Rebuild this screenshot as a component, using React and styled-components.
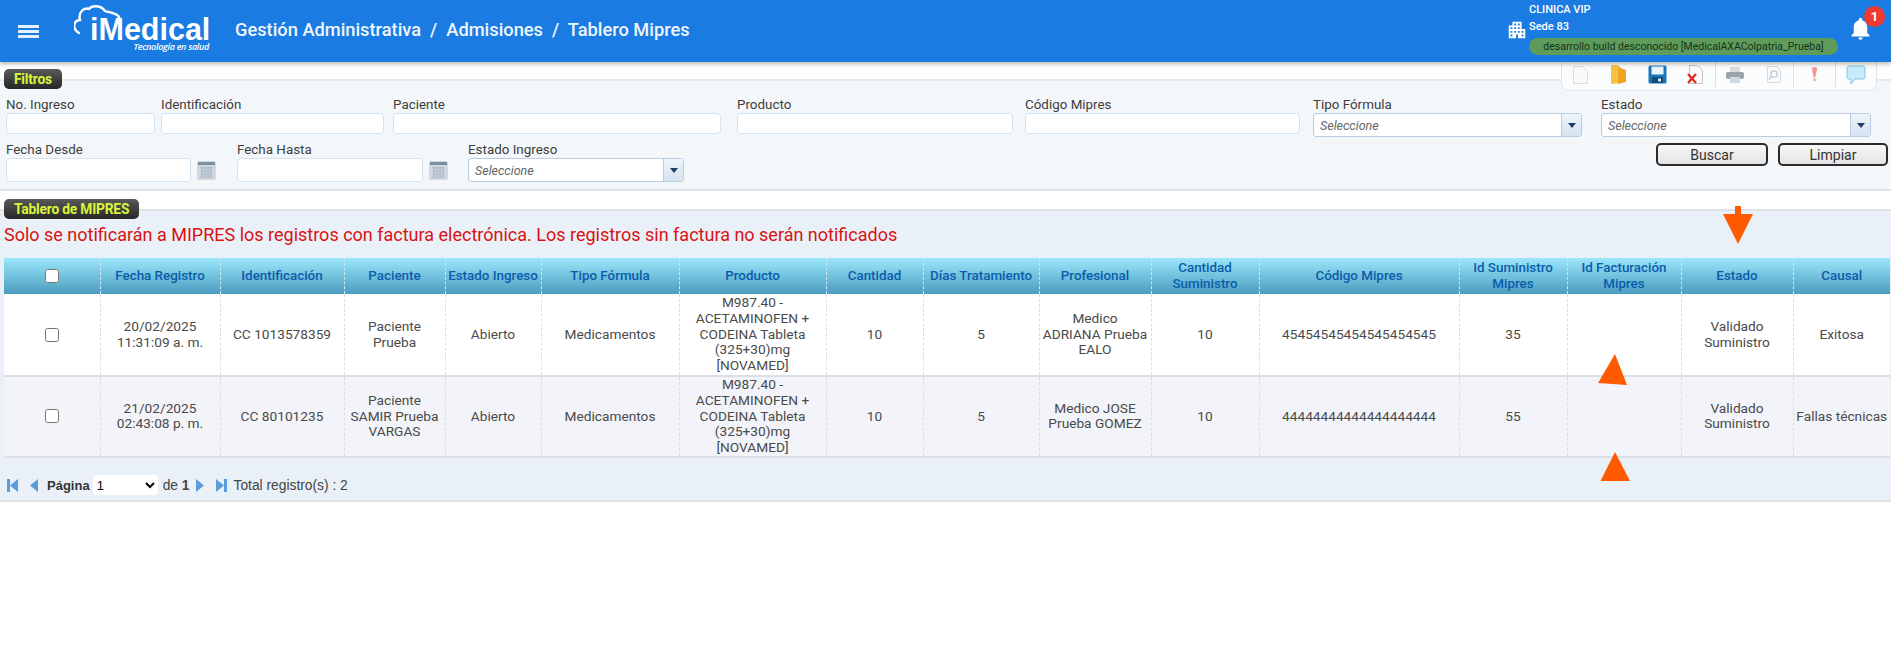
import React from 'react';
import styled, { createGlobalStyle } from 'styled-components';
import { MdApartment, MdNotifications } from 'react-icons/md';

const GlobalStyle = createGlobalStyle`
  html, body {
    margin: 0;
    padding: 0;
    background: #fff;
    font-family: Roboto, "Liberation Sans", sans-serif;
    color: #444;
  }
`;

const Page = styled.div`
  position: relative;
  width: 1891px;
  height: 664px;
  overflow: hidden;
`;

/* barra superior */
const Header = styled.header`
  height: 62px;
  background: #1a7be2;
  box-shadow: 0 2px 4px rgba(70, 50, 30, 0.35);
  display: flex;
  align-items: center;
  color: #fff;
  padding-left: 18px;
  position: relative;
  z-index: 3;
`;

const MenuButton = styled.button`
  width: 21px;
  height: 13px;
  border: 0;
  padding: 0;
  background: transparent;
  display: flex;
  flex-direction: column;
  justify-content: space-between;
  margin-right: 35px;
  & span {
    height: 3px;
    background: #e4f0fb;
    display: block;
  }
`;

const Logo = styled.div`
  position: relative;
  width: 135px;
  height: 62px;
  margin-right: 26px;
`;

const LogoCloud = styled.svg`
  position: absolute;
  left: 0;
  top: 0;
`;

const LogoName = styled.div`
  position: absolute;
  left: 16px;
  top: 16px;
  font: bold 30.500px/26px "Liberation Sans", sans-serif;
`;

const LogoTag = styled.div`
  position: absolute;
  right: 0;
  top: 42px;
  font: italic 600 9px/10px "Open Sans", sans-serif;
  letter-spacing: -0.3px;
  white-space: nowrap;
`;

const Breadcrumb = styled.div`
  font-size: 18.250px;
  font-weight: 500;
  white-space: pre;
  color: #eef6fd;
  margin-top: -4px;
`;

const SiteInfo = styled.div`
  margin-left: auto;
  display: flex;
  align-items: flex-start;
  height: 62px;
`;

const SiteIcon = styled(MdApartment)`
  font-size: 22px;
  margin-top: 19px;
  margin-right: 1px;
`;

const SiteText = styled.div`
  display: flex;
  flex-direction: column;
  padding-top: 1px;
  font-size: 11px;
  font-weight: 500;
  line-height: 17px;
  width: 311px;
`;

const EnvPill = styled.div`
  height: 17px;
  width: 309px;
  margin-top: 3px;
  border-radius: 9px;
  background: #5f9c5c;
  color: #12331a;
  font-size: 10.5px;
  font-weight: 400;
  line-height: 17px;
  text-align: center;
  white-space: nowrap;
`;

const BellBox = styled.div`
  position: relative;
  width: 44px;
  margin-left: 7px;
  padding-top: 15px;
  font-size: 27px;
  line-height: 0;
`;

const Badge = styled.span`
  position: absolute;
  left: 17px;
  top: 6px;
  width: 21px;
  height: 21px;
  border-radius: 50%;
  background: #ee3a30;
  color: #fff;
  font-size: 13px;
  font-weight: 700;
  line-height: 21px;
  text-align: center;
`;

/* barra de herramientas flotante */
const Toolbar = styled.div`
  position: absolute;
  top: 62px;
  left: 1561px;
  width: 316px;
  height: 29px;
  box-sizing: border-box;
  border: 1px solid #e3e6e9;
  border-top: 0;
  border-radius: 0 0 7px 7px;
  background: #fbfcfd;
  display: flex;
  align-items: flex-start;
  z-index: 2;
`;

const ToolSlot = styled.div`
  width: ${p => p.$w}px;
  height: 25px;
  display: flex;
  align-items: center;
  justify-content: center;
  border-right: ${p => (p.$sep ? '1px solid #dfe2e5' : '0')};
  box-sizing: border-box;
`;

const Section = styled.section`
  padding-top: ${p => p.$top}px;
`;

const Legend = styled.div`
  position: relative;
  z-index: 1;
  display: inline-block;
  height: 20px;
  box-sizing: border-box;
  margin-left: 4px;
  padding: 0 10px;
  border-radius: 5px;
  background: linear-gradient(#5a5a5a, #262626);
  color: #d9f53a;
  font-size: 13.8px;
  font-weight: 700;
  line-height: 20px;
  letter-spacing: -0.2px;
  vertical-align: top;
`;

const FilterPanel = styled.div`
  margin-top: -10px;
  height: 112px;
  box-sizing: border-box;
  background: #f4f7fa;
  border-top: 2px solid #e6e8ea;
  border-bottom: 2px solid #dfe2e5;
  padding: 16px 0 0 6px;
`;

const FieldRow = styled.div`
  display: flex;
  align-items: flex-start;
  margin-bottom: 5px;
`;

const Field = styled.div`
  width: ${p => p.$w}px;
  margin-right: ${p => p.$gap || 0}px;
  flex: none;
`;

const Label = styled.label`
  display: block;
  height: 16px;
  font-size: 13.4px;
  line-height: 16px;
  color: #3d3d3d;
`;

const TextInput = styled.input`
  display: block;
  width: ${p => (p.$w ? `${p.$w}px` : '100%')};
  height: ${p => p.$h || 21}px;
  box-sizing: border-box;
  border: 1px solid #d3e3ef;
  border-radius: 4px;
  background: #fff;
  outline: none;
`;

const DateWrap = styled.div`
  display: flex;
  align-items: center;
  gap: 6px;
`;

const Combo = styled.div`
  width: 100%;
  height: 24px;
  box-sizing: border-box;
  border: 1px solid #b9cde0;
  border-radius: 3px;
  background: #fff;
  display: flex;
  align-items: center;
  font-size: 12.5px;
  font-style: italic;
  color: #666;
  padding-left: 6px;
`;

const ComboArrow = styled.span`
  margin-left: auto;
  width: 19px;
  height: 100%;
  background: linear-gradient(#eef4fa, #d5e3f1);
  border-left: 1px solid #b9cde0;
  display: flex;
  align-items: center;
  justify-content: center;
  &::after {
    content: '';
    border: 4px solid transparent;
    border-top: 5px solid #1f3f66;
    border-bottom: 0;
  }
`;

const ButtonGroup = styled.div`
  margin-left: auto;
  margin-top: 1px;
  display: flex;
  gap: 10px;
  padding-right: 3px;
`;

const ActionButton = styled.button`
  width: ${p => p.$w}px;
  height: 23px;
  box-sizing: border-box;
  border: 2px solid #2b2b2b;
  border-radius: 5px;
  background: linear-gradient(#f7f7f7, #e4e4e4);
  color: #333;
  font-family: Roboto, sans-serif;
  font-size: 14px;
  padding: 0;
`;

const TablePanel = styled.div`
  margin-top: -10px;
  height: 293px;
  box-sizing: border-box;
  background: #e9f0f7;
  border-top: 2px solid #dfe3e7;
  border-bottom: 2px solid #dfe2e5;
  padding: 0 1px 0 4px;
`;

const Notice = styled.div`
  height: 47px;
  font-size: 18px;
  line-height: 48px;
  color: #d81313;
  white-space: nowrap;
`;

const Grid = styled.table`
  table-layout: fixed;
  width: 1886px;
  border-collapse: collapse;
`;

const HeadCell = styled.th`
  height: 36px;
  padding: 0 1px;
  background: linear-gradient(#9be7fb, #4a9cbe);
  color: #0b5cab;
  font-size: 13.4px;
  font-weight: 500;
  line-height: 16px;
  text-align: center;
  border-left: 1px dashed #cfe9f2;
  &:first-child {
    border-left: 0;
  }
`;

const Row = styled.tr`
  background: ${p => (p.$alt ? '#f2f4f9' : '#fff')};
  border-bottom: 2px solid #dcdfe3;
  & > td {
    height: ${p => (p.$alt ? 78 : 81)}px;
  }
`;

const Cell = styled.td`
  padding: 0 3px;
  font-size: 13.7px;
  line-height: 15.8px;
  text-align: center;
  color: #4a4a4a;
  border-left: 1px dashed #dddddd;
  &:first-child {
    border-left: 0;
  }
  &:last-child {
    padding: 0 1px;
  }
`;

const Check = styled.input`
  display: block;
  margin: 0 auto;
  width: 14px;
  height: 14px;
`;

const Pager = styled.div`
  height: 46px;
  padding: 9px 0 0 3px;
  box-sizing: border-box;
  display: flex;
  align-items: center;
  font-family: "Liberation Sans", sans-serif;
  font-size: 13.8px;
  color: #444;
`;

const PagerButton = styled.svg`
  flex: none;
  margin-right: ${p => p.$mr}px;
`;

const PageLabel = styled.b`
  color: #333;
  font-size: 13px;
  margin-right: 3px;
`;

const PageSelect = styled.select`
  width: 65px;
  height: 20px;
  box-sizing: border-box;
  border: 0;
  border-radius: 4px;
  background: #fff;
  font-family: "Liberation Sans", sans-serif;
  font-size: 13px;
  margin-right: 5px;
`;

const PageOf = styled.span`
  margin-right: 6px;
  white-space: pre;
`;

/* flechas de anotación sobre la captura */
const Annotation = styled.svg`
  position: absolute;
  left: 0;
  top: 0;
  pointer-events: none;
  z-index: 4;
`;

const NewDocIcon = () => (
  <svg width="17" height="20" viewBox="0 0 17 20">
    <path d="M1.500 1.500h9l5 5v12h-14z" fill="#fafafa" stroke="#dcdcdc" />
  </svg>
);

const FolderIcon = () => (
  <svg width="17" height="21" viewBox="0 0 17 21">
    <path d="M1 1h7l2 2v16l-9 1z" fill="#f7c23f" />
    <path d="M8 3l8 3v12l-8 2z" fill="#eda51f" />
  </svg>
);

const SaveIcon = () => (
  <svg width="19" height="19" viewBox="0 0 19 19">
    <rect x="0.5" y="0.5" width="18" height="18" rx="1.5" fill="#1776b8" />
    <rect x="3.5" y="1.5" width="12" height="8" fill="#e8f4fb" />
    <rect x="4" y="12" width="11" height="6" fill="#0e4c7c" />
    <rect x="10" y="13.5" width="3" height="3" fill="#d4e4ef" />
  </svg>
);

const DeleteIcon = () => (
  <svg width="17" height="21" viewBox="0 0 17 21">
    <path d="M2.500 1.500h8l5 5v13h-13z" fill="#fafafa" stroke="#c4c4c4" />
    <path d="M1 10l8 9M9 10l-8 9" stroke="#df2a20" strokeWidth="2.2" />
  </svg>
);

const PrintIcon = () => (
  <svg width="20" height="18" viewBox="0 0 20 18">
    <rect x="5" y="1" width="10" height="6" fill="#d8dcde" />
    <rect x="1" y="6" width="18" height="7" rx="2" fill="#9aa3a8" />
    <rect x="5" y="11" width="10" height="6" fill="#c9dbe5" />
  </svg>
);

const PreviewIcon = () => (
  <svg width="16" height="19" viewBox="0 0 16 19">
    <path d="M1.500 1.500h9l4 4v12h-13z" fill="#fafafa" stroke="#d8dcdc" />
    <circle cx="8" cy="9" r="3.2" fill="none" stroke="#b8cdd6" strokeWidth="1.3" />
    <path d="M5.500 11.500l-2.500 3" stroke="#b8cdd6" strokeWidth="1.5" />
  </svg>
);

const AlertIcon = () => (
  <svg width="7" height="17" viewBox="0 0 8 18">
    <path d="M1 2.500a3 2 0 0 1 6 0L5 12H3z" fill="#f29a90" />
    <circle cx="4" cy="15" r="2" fill="#f5bdb6" />
  </svg>
);

const ChatIcon = () => (
  <svg width="20" height="20" viewBox="0 0 20 20">
    <path d="M3 1h14a2 2 0 0 1 2 2v9a2 2 0 0 1-2 2H9l-4 5v-5H3a2 2 0 0 1-2-2V3a2 2 0 0 1 2-2z" fill="#c8eafa" stroke="#7cc6ea" />
  </svg>
);

const CalendarIcon = () => (
  <svg width="19" height="19" viewBox="0 0 19 19">
    <rect width="19" height="19" rx="2" fill="#cfd8e2" />
    <rect x="1" y="1" width="17" height="3" fill="#7d8da0" />
    <path d="M4 7h11M4 10h11M4 13h11M4 16h11M5 6v11M8 6v11M11 6v11M14 6v11" stroke="#98a3b1" strokeWidth="1" strokeDasharray="1.5 1" />
  </svg>
);

const PAGER_COLOR = '#5a9bdc';

const FirstIcon = () => (
  <PagerButton $mr={12} width="11" height="13" viewBox="0 0 11 13">
    <rect width="3" height="13" fill={PAGER_COLOR} />
    <path d="M11 0v13L3 6.500z" fill={PAGER_COLOR} />
  </PagerButton>
);

const PrevIcon = () => (
  <PagerButton $mr={9} width="8" height="13" viewBox="0 0 8 13">
    <path d="M8 0v13L0 6.500z" fill={PAGER_COLOR} />
  </PagerButton>
);

const NextIcon = () => (
  <PagerButton $mr={12} width="8" height="13" viewBox="0 0 8 13">
    <path d="M0 0v13l8-6.500z" fill={PAGER_COLOR} />
  </PagerButton>
);

const LastIcon = () => (
  <PagerButton $mr={7} width="11" height="13" viewBox="0 0 11 13">
    <path d="M0 0v13l8-6.500z" fill={PAGER_COLOR} />
    <rect x="8" width="3" height="13" fill={PAGER_COLOR} />
  </PagerButton>
);

const columns = [
  { title: '', w: 96 },
  { title: 'Fecha Registro', w: 120 },
  { title: 'Identificación', w: 124 },
  { title: 'Paciente', w: 101 },
  { title: 'Estado Ingreso', w: 96 },
  { title: 'Tipo Fórmula', w: 138 },
  { title: 'Producto', w: 147 },
  { title: 'Cantidad', w: 97 },
  { title: 'Días Tratamiento', w: 116 },
  { title: 'Profesional', w: 112 },
  { title: 'Cantidad Suministro', w: 108 },
  { title: 'Código Mipres', w: 200 },
  { title: 'Id Suministro Mipres', w: 108 },
  { title: 'Id Facturación Mipres', w: 114 },
  { title: 'Estado', w: 112 },
  { title: 'Causal', w: 97 },
];

const PRODUCT = 'M987.40 - ACETAMINOFEN + CODEINA Tableta (325+30)mg [NOVAMED]';

const rows = [
  ['20/02/2025 11:31:09 a. m.', 'CC 1013578359', 'Paciente Prueba', 'Abierto', 'Medicamentos', PRODUCT, '10', '5', 'Medico ADRIANA Prueba EALO', '10', '45454545454545454545', '35', '', 'Validado Suministro', 'Exitosa'],
  ['21/02/2025 02:43:08 p. m.', 'CC 80101235', 'Paciente SAMIR Prueba VARGAS', 'Abierto', 'Medicamentos', PRODUCT, '10', '5', 'Medico JOSE Prueba GOMEZ', '10', '44444444444444444444', '55', '', 'Validado Suministro', 'Fallas técnicas'],
];

const Select = () => (
  <Combo>
    Seleccione
    <ComboArrow />
  </Combo>
);

export default function App() {
  return (
    <Page>
      <GlobalStyle />
      <Header>
        <MenuButton aria-label="Menú">
          <span />
          <span />
          <span />
        </MenuButton>
        <Logo>
          <LogoCloud width="60" height="45" viewBox="0 0 60 45" fill="none">
            <path
              d="M5 33C1 31 -1 26 1 23C2 21 4 20 6 20C4 12 10 7 15 9C18 5 27 5 31 11C33 12 37 12 41 14C45 15 46 18 46 22"
              stroke="#fff"
              strokeWidth="2.4"
              strokeLinecap="round"
            />
          </LogoCloud>
          <LogoName>iMedical</LogoName>
          <LogoTag>Tecnología en salud</LogoTag>
        </Logo>
        <Breadcrumb>Gestión Administrativa  /  Admisiones  /  Tablero Mipres</Breadcrumb>
        <SiteInfo>
          <SiteIcon />
          <SiteText>
            <span>CLINICA VIP</span>
            <span>Sede 83</span>
            <EnvPill>desarrollo build desconocido [MedicalAXAColpatria_Prueba]</EnvPill>
          </SiteText>
          <BellBox>
            <MdNotifications />
            <Badge>1</Badge>
          </BellBox>
        </SiteInfo>
      </Header>

      <Toolbar>
        <ToolSlot $w={38}><NewDocIcon /></ToolSlot>
        <ToolSlot $w={38}><FolderIcon /></ToolSlot>
        <ToolSlot $w={39}><SaveIcon /></ToolSlot>
        <ToolSlot $w={39} $sep><DeleteIcon /></ToolSlot>
        <ToolSlot $w={40}><PrintIcon /></ToolSlot>
        <ToolSlot $w={39} $sep><PreviewIcon /></ToolSlot>
        <ToolSlot $w={42} $sep><AlertIcon /></ToolSlot>
        <ToolSlot $w={40}><ChatIcon /></ToolSlot>
      </Toolbar>

      <Section $top={7}>
        <Legend>Filtros</Legend>
        <FilterPanel>
          <FieldRow>
            <Field $w={149} $gap={6}>
              <Label>No. Ingreso</Label>
              <TextInput />
            </Field>
            <Field $w={223} $gap={9}>
              <Label>Identificación</Label>
              <TextInput />
            </Field>
            <Field $w={328} $gap={16}>
              <Label>Paciente</Label>
              <TextInput />
            </Field>
            <Field $w={276} $gap={12}>
              <Label>Producto</Label>
              <TextInput />
            </Field>
            <Field $w={275} $gap={13}>
              <Label>Código Mipres</Label>
              <TextInput />
            </Field>
            <Field $w={269} $gap={19}>
              <Label>Tipo Fórmula</Label>
              <Select />
            </Field>
            <Field $w={270}>
              <Label>Estado</Label>
              <Select />
            </Field>
          </FieldRow>
          <FieldRow>
            <Field $w={210} $gap={21}>
              <Label>Fecha Desde</Label>
              <DateWrap>
                <TextInput $w={186} $h={24} />
                <CalendarIcon />
              </DateWrap>
            </Field>
            <Field $w={211} $gap={20}>
              <Label>Fecha Hasta</Label>
              <DateWrap>
                <TextInput $w={186} $h={24} />
                <CalendarIcon />
              </DateWrap>
            </Field>
            <Field $w={216}>
              <Label>Estado Ingreso</Label>
              <Select />
            </Field>
            <ButtonGroup>
              <ActionButton $w={112}>Buscar</ActionButton>
              <ActionButton $w={110}>Limpiar</ActionButton>
            </ButtonGroup>
          </FieldRow>
        </FilterPanel>
      </Section>

      <Section $top={8}>
        <Legend>Tablero de MIPRES</Legend>
        <TablePanel>
          <Notice>Solo se notificarán a MIPRES los registros con factura electrónica. Los registros sin factura no serán notificados</Notice>
          <Grid>
            <colgroup>
              {columns.map((c, i) => <col key={i} width={c.w} />)}
            </colgroup>
            <thead>
              <tr>
                {columns.map((c, i) => (
                  <HeadCell key={i}>{i === 0 ? <Check type="checkbox" /> : c.title}</HeadCell>
                ))}
              </tr>
            </thead>
            <tbody>
              {rows.map((row, r) => (
                <Row key={r} $alt={r === 1}>
                  <Cell><Check type="checkbox" /></Cell>
                  {row.map((value, i) => <Cell key={i}>{value}</Cell>)}
                </Row>
              ))}
            </tbody>
          </Grid>
          <Pager>
            <FirstIcon />
            <PrevIcon />
            <PageLabel>Página</PageLabel>
            <PageSelect defaultValue="1">
              <option value="1">1</option>
            </PageSelect>
            <PageOf>de <b>1</b></PageOf>
            <NextIcon />
            <LastIcon />
            <span>Total registro(s) : 2</span>
          </Pager>
        </TablePanel>
      </Section>

      <Annotation width="1891" height="664" viewBox="0 0 1891 664">
        <path d="M1735 206h6v8h12l-15 30-15-30h12z" fill="#ff5a00" />
        <path d="M1615 354l-17 29 29 2z" fill="#ff5a00" />
        <path d="M1615 452l-14.500 29h29.500z" fill="#ff5a00" />
      </Annotation>
    </Page>
  );
}
